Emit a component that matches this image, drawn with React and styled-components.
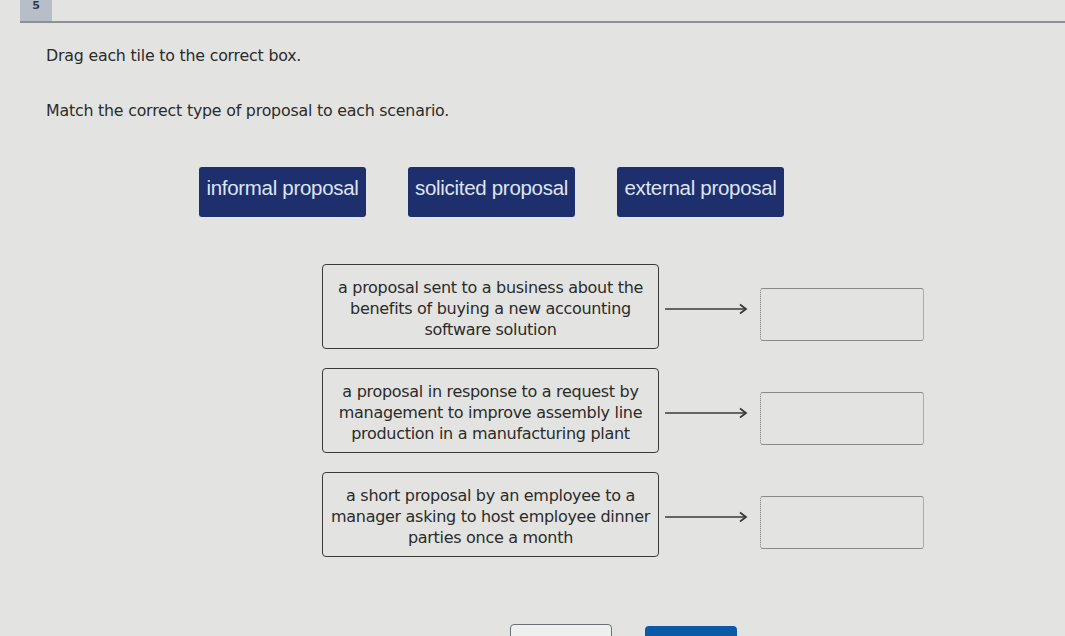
import React from 'react'
import styled, { createGlobalStyle } from 'styled-components'

const GlobalStyle = createGlobalStyle`
  html, body {
    margin: 0;
    padding: 0;
    background: #e3e4e1;
    overflow: hidden;
  }
  body {
    font-family: "DejaVu Sans", "Liberation Sans", sans-serif;
    color: #2a2a2a;
  }
`

const tiles = ['informal proposal', 'solicited proposal', 'external proposal']

const scenarios = [
  ['a proposal sent to a business about the', 'benefits of buying a new accounting', 'software solution'],
  ['a proposal in response to a request by', 'management to improve assembly line', 'production in a manufacturing plant'],
  ['a short proposal by an employee to a', 'manager asking to host employee dinner', 'parties once a month'],
]

export default function App() {
  return (
    <Page>
      <GlobalStyle />
      <TopBar>
        <QuestionTab>5</QuestionTab>
      </TopBar>
      <Prompt>Drag each tile to the correct box.</Prompt>
      <Prompt $gap={35}>Match the correct type of proposal to each scenario.</Prompt>

      <TileRow>
        {tiles.map((t) => (
          <Tile key={t}>{t}</Tile>
        ))}
      </TileRow>

      <Matches>
        {scenarios.map((lines, i) => (
          <MatchRow key={i}>
            <Scenario>
              {lines.map((l) => (
                <span key={l}>{l}</span>
              ))}
            </Scenario>
            <Arrow width="101" height="20" viewBox="0 0 101 20">
              <line x1="6" y1="10" x2="87" y2="10" stroke="#3a3a3a" strokeWidth="1.6" />
              <polyline points="81,5.5 87,10 81,14.5" fill="none" stroke="#3a3a3a" strokeWidth="1.8" />
            </Arrow>
            <DropBox />
          </MatchRow>
        ))}
      </Matches>

      <Footer>
        <ResetButton />
        <NextButton />
      </Footer>
    </Page>
  )
}

const Page = styled.div`
  width: 1065px;
  height: 636px;
  overflow: hidden;
`

const TopBar = styled.div`
  height: 21px;
  border-bottom: 2px solid #8e9194;
  display: flex;
  margin-left: 20px;
`

const QuestionTab = styled.div`
  width: 32px;
  height: 21px;
  background: #b8bec7;
  color: #2d3a4f;
  font-size: 11px;
  font-weight: bold;
  line-height: 11px;
  text-align: center;
`

const Prompt = styled.p`
  margin: ${(p) => p.$gap || 23}px 0 0 46px;
  font-size: 15.8px;
  line-height: 20px;
  letter-spacing: -0.2px;
  color: #2b2b2b;
`

const TileRow = styled.div`
  display: flex;
  gap: 42px;
  margin: 46px 0 0 199px;
`

const Tile = styled.div`
  width: 167px;
  height: 50px;
  box-sizing: border-box;
  background: #1e2f6e;
  border-radius: 3px;
  color: #dfe4f0;
  font-family: "Liberation Sans", Arial, sans-serif;
  font-size: 20.5px;
  display: flex;
  align-items: center;
  justify-content: center;
  padding-bottom: 8px;
  white-space: nowrap;
  letter-spacing: -0.3px;
`

const Matches = styled.div`
  display: flex;
  flex-direction: column;
  gap: 19px;
  margin: 47px 0 0 322px;
`

const MatchRow = styled.div`
  display: flex;
  align-items: center;
`

const Scenario = styled.div`
  width: 337px;
  height: 85px;
  box-sizing: border-box;
  border: 1.5px solid #3a3a3a;
  border-radius: 4px;
  display: flex;
  flex-direction: column;
  align-items: center;
  justify-content: center;
  font-size: 16px;
  line-height: 21px;
  letter-spacing: -0.3px;
  color: #2b2b2b;
  padding-top: 3px;
  white-space: nowrap;
`

const Arrow = styled.svg`
  flex: none;
  display: block;
  margin-top: 4px;
`

const DropBox = styled.div`
  width: 164px;
  height: 53px;
  box-sizing: border-box;
  border: 1px dotted #777;
  border-top: 1.5px solid #8a8a8a;
  border-bottom: 1.5px solid #8a8a8a;
  border-radius: 3px;
  margin-top: 16px;
`

const Footer = styled.div`
  display: flex;
  gap: 33px;
  margin: 67px 0 0 510px;
`

const ResetButton = styled.div`
  width: 100px;
  height: 30px;
  border: 1.5px solid #6b6f78;
  border-radius: 4px;
  background: #eef0ee;
`

const NextButton = styled.div`
  width: 92px;
  height: 30px;
  margin-top: 2px;
  border-radius: 4px;
  background: #0b5aa8;
`
